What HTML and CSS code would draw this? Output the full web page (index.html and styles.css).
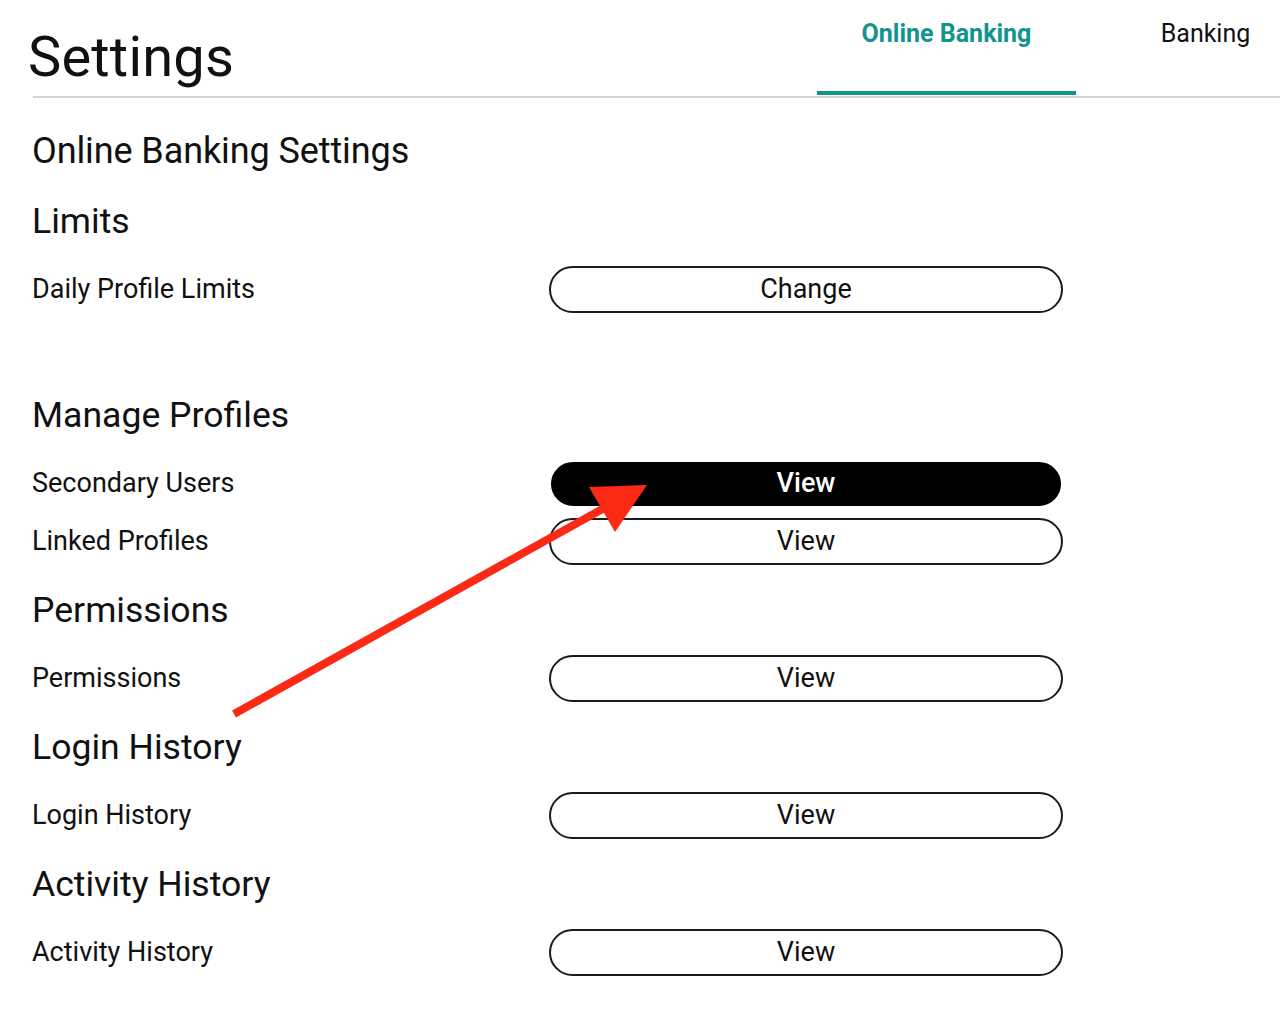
FILE: index.html
```html
<!DOCTYPE html>
<html lang="en">
<head>
<meta charset="utf-8">
<title>Settings</title>
<link rel="stylesheet" href="styles.css">
</head>
<body>
<div class="page">
  <header class="header">
    <h1 class="title">Settings</h1>
    <nav class="tabs">
      <a class="tab tab--active">Online Banking</a>
      <a class="tab">Banking</a>
    </nav>
  </header>

  <main class="content">
    <h2 class="page-heading">Online Banking Settings</h2>

    <section class="section section--spaced">
      <h3 class="section-title">Limits</h3>
      <div class="rows">
        <div class="row"><span class="label">Daily Profile Limits</span><button class="btn">Change</button></div>
      </div>
    </section>

    <section class="section">
      <h3 class="section-title">Manage Profiles</h3>
      <div class="rows">
        <div class="row"><span class="label">Secondary Users</span><button class="btn btn--dark">View</button></div>
        <div class="row"><span class="label">Linked Profiles</span><button class="btn">View</button></div>
      </div>
    </section>

    <section class="section">
      <h3 class="section-title">Permissions</h3>
      <div class="rows">
        <div class="row"><span class="label">Permissions</span><button class="btn">View</button></div>
      </div>
    </section>

    <section class="section">
      <h3 class="section-title">Login History</h3>
      <div class="rows">
        <div class="row"><span class="label">Login History</span><button class="btn">View</button></div>
      </div>
    </section>

    <section class="section">
      <h3 class="section-title">Activity History</h3>
      <div class="rows">
        <div class="row"><span class="label">Activity History</span><button class="btn">View</button></div>
      </div>
    </section>
  </main>

  <svg class="annotation" width="1280" height="1016" viewBox="0 0 1280 1016" aria-hidden="true">
    <line x1="234" y1="714" x2="606" y2="507" stroke="#fc2a14" stroke-width="8"/>
    <polygon points="589,487 647,485 615,532" fill="#fc2a14"/>
  </svg>
</div>
</body>
</html>
```
FILE: styles.css
```css
html, body {
  margin: 0;
  padding: 0;
  background: #ffffff;
}

body {
  font-family: Roboto, "Liberation Sans", Arial, sans-serif;
  color: #111111;
  overflow: hidden;
}

.page {
  position: relative;
  width: 1280px;
  height: 1016px;
  overflow: hidden;
}

.header {
  display: flex;
  justify-content: space-between;
  align-items: flex-start;
  margin-left: 33px;
  height: 96px;
  border-bottom: 2px solid #cdd6db;
}

.title {
  margin: 25px 0 0 -5px;
  font-size: 56px;
  line-height: 64px;
  font-weight: 400;
  letter-spacing: 0.2px;
  color: #111111;
}

.tabs {
  display: flex;
  margin-right: -55px;
}

.tab {
  display: block;
  width: 259px;
  box-sizing: border-box;
  height: 95px;
  padding-top: 19px;
  text-align: center;
  font-size: 25px;
  line-height: 29px;
  color: #111111;
  border-bottom: 4px solid transparent;
}

.tab--active {
  color: #11948e;
  font-weight: 700;
  border-bottom-color: #11948e;
}

.content {
  padding: 32px 0 0 32px;
}

.page-heading {
  margin: 0;
  padding-bottom: 4px;
  font-size: 36px;
  line-height: 42px;
  font-weight: 400;
  letter-spacing: -0.1px;
}

.section {
  margin-top: 24px;
}

.section--spaced {
  padding-bottom: 57px;
}

.section-title {
  margin: 0 0 24px;
  font-size: 35.6px;
  line-height: 42px;
  font-weight: 400;
}

.rows {
  display: flex;
  flex-direction: column;
  gap: 11px;
}

.row {
  display: grid;
  grid-template-columns: 517px 514px;
  align-items: center;
  height: 47px;
}

.label {
  font-size: 27px;
  line-height: 31px;
}

.btn {
  box-sizing: border-box;
  height: 47px;
  width: 514px;
  margin: 0;
  padding: 0;
  border: 2px solid #1b1b1b;
  border-radius: 24px;
  background: #ffffff;
  font-family: Roboto, "Liberation Sans", Arial, sans-serif;
  font-size: 27px;
  line-height: 31px;
  color: #111111;
  text-align: center;
}

.btn--dark {
  width: 510px;
  height: 44px;
  margin-left: 2px;
  background: #000000;
  border-color: #000000;
  color: #ffffff;
  font-weight: 500;
}

.annotation {
  position: absolute;
  left: 0;
  top: 0;
  pointer-events: none;
}
```
